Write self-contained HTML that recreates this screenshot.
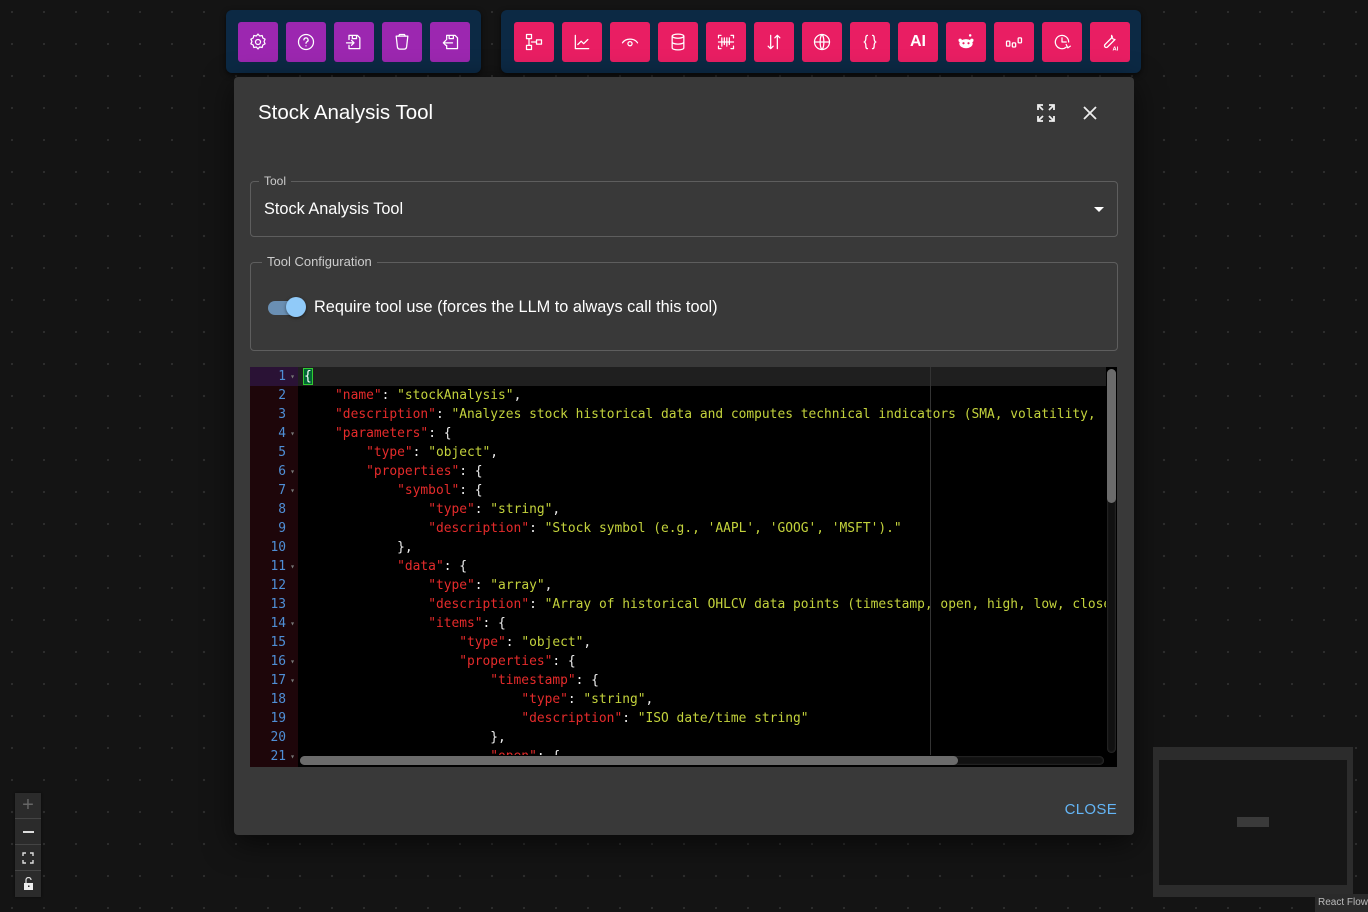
<!DOCTYPE html>
<html><head><meta charset="utf-8"><style>
*{box-sizing:border-box;margin:0;padding:0}
body{width:1368px;height:912px;overflow:hidden;background:#141414;background-image:radial-gradient(circle,#2e2e2e 1px,transparent 1.3px);background-size:32px 32px;background-position:-4px -4px;font-family:"Liberation Sans",sans-serif;position:relative;color:#fff}
.grp{position:absolute;top:10px;height:63px;background:#0c2944;border-radius:6px;box-shadow:0 2px 6px rgba(0,0,0,.6)}
.btn{position:absolute;top:12px;width:40px;height:40px;border-radius:3px;display:flex;align-items:center;justify-content:center}
.p{background:#9c27b0}.r{background:#e91e63}
.btn svg{width:20px;height:20px;fill:none;stroke:#fff;stroke-width:1.5;stroke-linecap:round;stroke-linejoin:round}
.dlg{position:absolute;left:234px;top:77px;width:900px;height:758px;background:#393939;border-radius:4px;box-shadow:0 8px 30px rgba(0,0,0,.6)}
.title{position:absolute;left:24px;top:24px;font-size:20.5px;color:#fff}
.fs{position:absolute;border:1px solid #5e5e5e;border-radius:4px}
.lg{position:absolute;top:-8px;background:#393939;padding:0 5px;font-size:12px;color:#ccc}
.ed{position:absolute;left:16px;top:290px;width:867px;height:400px;background:#000;overflow:hidden;font-family:"DejaVu Sans Mono","Liberation Mono",monospace;font-size:12.9px}
.gut{position:absolute;left:0;top:0;width:48px;height:400px;background:#1e060a}
.ln{height:19px;line-height:19px;text-align:right;padding-right:12px;color:#4f8fd6;position:relative}
.ln.f::after{content:"▾";position:absolute;right:3px;font-size:8px;color:#777}
.code{position:absolute;left:54px;top:0;color:#eee}
.code div{height:19px;line-height:19px;white-space:pre}
.k{color:#e52b2b}.s{color:#c3d23c}
</style></head><body>

<div class="grp" style="left:226px;width:255px">
<div class="btn p" style="left:12px"><svg viewBox="0 0 24 24"><circle cx="12" cy="12" r="3"/><path d="M12 2.5l2 2.3 3-.6.8 3 2.7 1.4-1.2 2.8 1.2 2.8-2.7 1.4-.8 3-3-.6-2 2.3-2-2.3-3 .6-.8-3-2.7-1.4 1.2-2.8-1.2-2.8 2.7-1.4.8-3 3 .6z"/></svg></div>
<div class="btn p" style="left:60px"><svg viewBox="0 0 24 24"><circle cx="12" cy="12" r="9"/><path d="M9.5 9.5a2.5 2.5 0 1 1 3.5 2.3c-.7.4-1 1-1 1.7M12 16.5v.2"/></svg></div>
<div class="btn p" style="left:108px"><svg viewBox="0 0 24 24"><path d="M6 9V4h10l3 3v13H6v-4M3 13h9M9 10l3 3-3 3M10 4v4h5V4"/></svg></div>
<div class="btn p" style="left:156px"><svg viewBox="0 0 24 24"><path d="M5 5h14l-1.5 13a3 3 0 0 1-3 2.5h-5a3 3 0 0 1-3-2.5zM8 5l1-2h6l1 2"/></svg></div>
<div class="btn p" style="left:204px"><svg viewBox="0 0 24 24"><path d="M8 9V4h10l3 3v13H8v-4M15 13H4M7 10l-3 3 3 3M11 4v4h5V4"/></svg></div>
</div>

<div class="grp" style="left:501px;width:640px">
<div class="btn r" style="left:13px"><svg viewBox="0 0 24 24"><rect x="3" y="3" width="6" height="5"/><rect x="3" y="16" width="6" height="5"/><rect x="15" y="9.5" width="6" height="5"/><path d="M6 8v8M9 12h6"/></svg></div>
<div class="btn r" style="left:61px"><svg viewBox="0 0 24 24"><path d="M4 4v16h16M7 15l4-4 3 3 5-5"/></svg></div>
<div class="btn r" style="left:109px"><svg viewBox="0 0 24 24"><path d="M3 13a10 8 0 0 1 18 0"/><circle cx="12" cy="14" r="2.5"/></svg></div>
<div class="btn r" style="left:157px"><svg viewBox="0 0 24 24"><ellipse cx="12" cy="5" rx="7" ry="2.5"/><path d="M5 5v14c0 1.4 3 2.5 7 2.5s7-1.1 7-2.5V5M5 12c0 1.4 3 2.5 7 2.5s7-1.1 7-2.5"/></svg></div>
<div class="btn r" style="left:205px"><svg viewBox="0 0 24 24"><path d="M3 7V4h3M18 4h3v3M3 17v3h3M18 20h3v-3M7 7v10M10 7v8M13 7v10M16 7v8M3 12h18"/></svg></div>
<div class="btn r" style="left:253px"><svg viewBox="0 0 24 24"><path d="M8 4v16M5 17l3 3 3-3M16 20V4M13 7l3-3 3 3"/></svg></div>
<div class="btn r" style="left:301px"><svg viewBox="0 0 24 24"><circle cx="12" cy="12" r="9"/><path d="M3 12h18M12 3c3 3 3 15 0 18M12 3c-3 3-3 15 0 18"/></svg></div>
<div class="btn r" style="left:349px"><svg viewBox="0 0 24 24"><path d="M9 4c-2 0-2 2-2 4s-1 4-2 4c1 0 2 2 2 4s0 4 2 4M15 4c2 0 2 2 2 4s1 4 2 4c-1 0-2 2-2 4s0 4-2 4"/></svg></div>
<div class="btn r" style="left:397px;font-weight:bold;font-size:16px">AI</div>
<div class="btn r" style="left:445px"><svg viewBox="0 0 24 24" style="fill:#fff;stroke:none"><ellipse cx="12" cy="14" rx="8" ry="5.5"/><circle cx="5" cy="10" r="2"/><circle cx="19" cy="10" r="2"/><circle cx="17" cy="4" r="1.5"/><circle cx="9" cy="13.5" r="1.3" fill="#e91e63"/><circle cx="15" cy="13.5" r="1.3" fill="#e91e63"/></svg></div>
<div class="btn r" style="left:493px"><svg viewBox="0 0 24 24"><rect x="3" y="11" width="4" height="6" rx="1"/><rect x="10" y="13" width="4" height="5" rx="1"/><rect x="17" y="7" width="4" height="6" rx="1"/></svg></div>
<div class="btn r" style="left:541px"><svg viewBox="0 0 24 24"><path d="M20 12a8 8 0 1 0-3 6.3M12 7v5h5M17 15l2 4 3-2"/></svg></div>
<div class="btn r" style="left:589px"><svg viewBox="0 0 24 24"><path d="M14 4a4 4 0 0 0 4 5l-9 9a2 2 0 0 1-3-3l9-9a4 4 0 0 1-1-2z"/><text x="15" y="22" font-size="7" fill="#fff" stroke="none" font-family="Liberation Sans" font-weight="bold">AI</text></svg></div>
</div>

<div class="dlg">
<div class="title">Stock Analysis Tool</div>
<svg style="position:absolute;left:802px;top:26px" width="20" height="20" viewBox="0 0 20 20" fill="none" stroke="#eee" stroke-width="1.8"><path d="M2 7V2h5M2 2l5 5M13 2h5v5M18 2l-5 5M2 13v5h5M2 18l5-5M18 13v5h-5M18 18l-5-5"/></svg>
<svg style="position:absolute;left:849px;top:29px" width="14" height="14" viewBox="0 0 14 14" stroke="#eee" stroke-width="1.8"><path d="M1 1l12 12M13 1L1 13"/></svg>

<div class="fs" style="left:16px;top:104px;width:868px;height:56px">
<div class="lg" style="left:8px">Tool</div>
<div style="position:absolute;left:13px;top:18px;font-size:16.3px">Stock Analysis Tool</div>
<div style="position:absolute;right:13px;top:25px;width:0;height:0;border-left:5px solid transparent;border-right:5px solid transparent;border-top:5px solid #fff"></div>
</div>

<div class="fs" style="left:16px;top:185px;width:868px;height:89px">
<div class="lg" style="left:11px;font-size:13px;top:-9px">Tool Configuration</div>
<div style="position:absolute;left:17px;top:38px;width:34px;height:14px;border-radius:7px;background:#6a8fb3"></div>
<div style="position:absolute;left:35px;top:34px;width:20px;height:20px;border-radius:50%;background:#90caf9;box-shadow:0 1px 3px rgba(0,0,0,.5)"></div>
<div style="position:absolute;left:63px;top:35px;font-size:16.3px">Require tool use (forces the LLM to always call this tool)</div>
</div>

<div class="ed">
<div style="position:absolute;left:0;top:0;width:867px;height:19px;background:#1f1f1f"></div>
<div class="gut">
<div class="ln f" style="background:#2a1235">1</div><div class="ln">2</div><div class="ln">3</div><div class="ln f">4</div><div class="ln">5</div><div class="ln f">6</div><div class="ln f">7</div><div class="ln">8</div><div class="ln">9</div><div class="ln">10</div><div class="ln f">11</div><div class="ln">12</div><div class="ln">13</div><div class="ln f">14</div><div class="ln">15</div><div class="ln f">16</div><div class="ln f">17</div><div class="ln">18</div><div class="ln">19</div><div class="ln">20</div><div class="ln f">21</div>
</div>
<div style="position:absolute;left:680px;top:0;width:1px;height:400px;background:#333"></div>
<div class="code"><div><span style="outline:1px solid #3c3;background:#063;color:#fff">{</span></div><div>    <span class="k">"name"</span>: <span class="s">"stockAnalysis"</span>,</div><div>    <span class="k">"description"</span>: <span class="s">"Analyzes stock historical data and computes technical indicators (SMA, volatility, </span></div><div>    <span class="k">"parameters"</span>: {</div><div>        <span class="k">"type"</span>: <span class="s">"object"</span>,</div><div>        <span class="k">"properties"</span>: {</div><div>            <span class="k">"symbol"</span>: {</div><div>                <span class="k">"type"</span>: <span class="s">"string"</span>,</div><div>                <span class="k">"description"</span>: <span class="s">"Stock symbol (e.g., 'AAPL', 'GOOG', 'MSFT')."</span></div><div>            },</div><div>            <span class="k">"data"</span>: {</div><div>                <span class="k">"type"</span>: <span class="s">"array"</span>,</div><div>                <span class="k">"description"</span>: <span class="s">"Array of historical OHLCV data points (timestamp, open, high, low, close</span></div><div>                <span class="k">"items"</span>: {</div><div>                    <span class="k">"type"</span>: <span class="s">"object"</span>,</div><div>                    <span class="k">"properties"</span>: {</div><div>                        <span class="k">"timestamp"</span>: {</div><div>                            <span class="k">"type"</span>: <span class="s">"string"</span>,</div><div>                            <span class="k">"description"</span>: <span class="s">"ISO date/time string"</span></div><div>                        },</div><div>                        <span class="k">"open"</span>: {</div></div>
<div style="position:absolute;left:856px;top:0;width:11px;height:400px;background:#000"></div>
<div style="position:absolute;left:857px;top:2px;width:9px;height:384px;border-radius:5px;background:#111;box-shadow:inset 0 0 2px #444"></div>
<div style="position:absolute;left:857px;top:2px;width:9px;height:134px;border-radius:5px;background:#6b6b6b"></div>
<div style="position:absolute;left:48px;top:388px;width:808px;height:12px;background:#000"></div>
<div style="position:absolute;left:50px;top:389px;width:804px;height:9px;border-radius:5px;background:#111;box-shadow:inset 0 0 2px #444"></div>
<div style="position:absolute;left:50px;top:389px;width:658px;height:9px;border-radius:5px;background:#6b6b6b"></div>
</div>

<div style="position:absolute;right:17px;top:724px;font-size:15px;color:#64b5f6;letter-spacing:.3px">CLOSE</div>
</div>

<div style="position:absolute;left:15px;top:793px;width:26px;height:104px;background:#2b2b2b;box-shadow:0 0 2px rgba(0,0,0,.5)">
<div style="height:26px;border-bottom:1px solid #444;color:#666;font-size:20px;text-align:center;line-height:24px">+</div>
<div style="height:26px;border-bottom:1px solid #444;position:relative"><div style="position:absolute;left:8px;top:12px;width:11px;height:1.5px;background:#ddd"></div></div>
<div style="height:26px;border-bottom:1px solid #444;position:relative"><svg style="position:absolute;left:7px;top:7px" width="12" height="12" viewBox="0 0 12 12" fill="none" stroke="#ddd" stroke-width="1.4"><path d="M1 4V1h3M8 1h3v3M1 8v3h3M8 11h3V8"/></svg></div>
<div style="height:26px;position:relative"><svg style="position:absolute;left:8px;top:6px" width="11" height="13" viewBox="0 0 11 13"><path d="M3 6V3a2.5 2.5 0 0 1 5 0" fill="none" stroke="#ddd" stroke-width="1.2"/><rect x="1" y="6" width="9" height="7" fill="#eee"/><rect x="5" y="8.5" width="1.5" height="1.5" fill="#2b2b2b"/></svg></div>
</div>

<div style="position:absolute;left:1153px;top:747px;width:200px;height:150px;background:#2c2c2c">
<div style="position:absolute;left:6px;top:13px;width:188px;height:125px;background:#161616"></div>
<div style="position:absolute;left:84px;top:70px;width:32px;height:10px;background:#3a3a3a"></div>
</div>
<div style="position:absolute;left:1315px;top:894px;width:53px;height:18px;background:#2a2a2a;color:#bbb;font-size:10px;line-height:18px;padding-left:3px">React Flow</div>
</body></html>
